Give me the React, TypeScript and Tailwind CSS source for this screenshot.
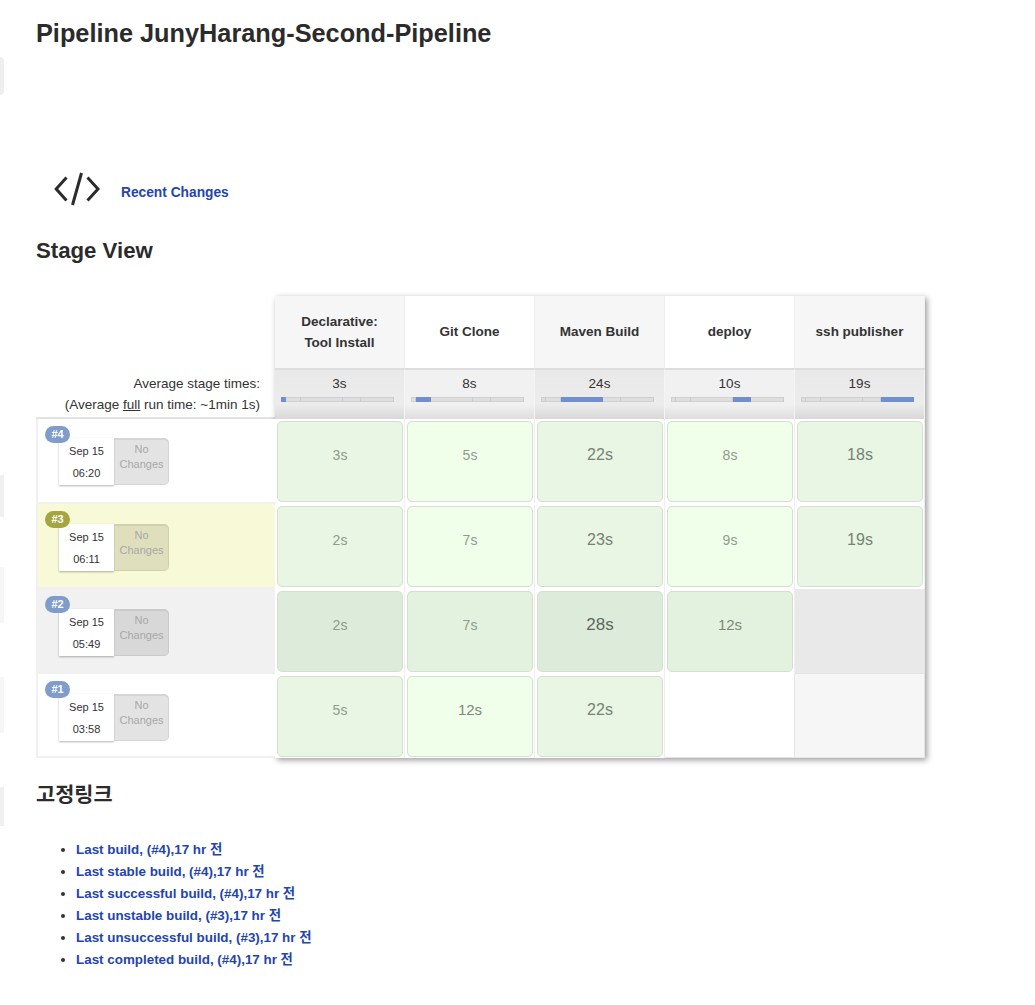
import React from 'react';

// segment widths of the mini timeline under each average time
const SEGMENTS = ['w-[5px]', 'w-[15px]', 'w-[42px]', 'w-[18px]', 'w-[33px]'];

const STAGES = [
  { name: ['Declarative:', 'Tool Install'], avg: '3s', head: 'bg-[#f6f6f6]', avgBg: 'from-[#e9e9e9] via-[#ececec] to-[#d8d8d8]' },
  { name: ['Git Clone'], avg: '8s', head: 'bg-white', avgBg: 'from-[#f1f1f1] via-[#f1f1f1] to-[#dedede]' },
  { name: ['Maven Build'], avg: '24s', head: 'bg-[#f6f6f6]', avgBg: 'from-[#e9e9e9] via-[#ececec] to-[#d8d8d8]' },
  { name: ['deploy'], avg: '10s', head: 'bg-white', avgBg: 'from-[#f1f1f1] via-[#f1f1f1] to-[#dedede]' },
  { name: ['ssh publisher'], avg: '19s', head: 'bg-[#f6f6f6]', avgBg: 'from-[#e9e9e9] via-[#ececec] to-[#d8d8d8]' },
];

const LIGHT = 'text-[14px] text-[#8f9c8c]';
const MID = 'text-[15px] text-[#7c897a]';
const DARK = 'text-[16px] text-[#768274]';
const DARKEST = 'text-[17px] text-[#5c675b]';

const BUILDS = [
  {
    id: '#4', date: 'Sep 15', time: '06:20', height: 'h-[85px]', rowBg: 'bg-white', badge: 'bg-[#7f9ccb]', change: 'bg-[#e3e3e3] border-[#d4d4d4]', top: 'pt-[19px]',
    cells: [
      { t: '3s', bg: 'bg-[#e8f6e3]', c: LIGHT },
      { t: '5s', bg: 'bg-[#efffea]', c: LIGHT },
      { t: '22s', bg: 'bg-[#e8f6e3]', c: DARK },
      { t: '8s', bg: 'bg-[#efffea]', c: LIGHT },
      { t: '18s', bg: 'bg-[#e8f6e3]', c: DARK },
    ],
  },
  {
    id: '#3', date: 'Sep 15', time: '06:11', height: 'h-[85px]', rowBg: 'bg-[#f8f9d6]', badge: 'bg-[#a5a63f]', change: 'bg-[#dfdfbd] border-[#d0d0ae]', top: 'pt-[20px]',
    cells: [
      { t: '2s', bg: 'bg-[#e8f6e3]', c: LIGHT },
      { t: '7s', bg: 'bg-[#efffea]', c: LIGHT },
      { t: '23s', bg: 'bg-[#e8f6e3]', c: DARK },
      { t: '9s', bg: 'bg-[#efffea]', c: LIGHT },
      { t: '19s', bg: 'bg-[#e8f6e3]', c: DARK },
    ],
  },
  {
    id: '#2', date: 'Sep 15', time: '05:49', height: 'h-[85px]', rowBg: 'bg-[#f1f1f1]', badge: 'bg-[#7f9ccb]', change: 'bg-[#d8d8d8] border-[#cacaca]', top: 'pt-[20px]',
    cells: [
      { t: '2s', bg: 'bg-[#dcebda]', c: LIGHT },
      { t: '7s', bg: 'bg-[#e3f1df]', c: LIGHT },
      { t: '28s', bg: 'bg-[#dcebda]', c: DARKEST },
      { t: '12s', bg: 'bg-[#e3f1df]', c: MID },
      null,
    ],
  },
  {
    id: '#1', date: 'Sep 15', time: '03:58', height: 'h-[84px]', rowBg: 'bg-white', badge: 'bg-[#7f9ccb]', change: 'bg-[#e3e3e3] border-[#d4d4d4]', top: 'pt-[20px]',
    cells: [
      { t: '5s', bg: 'bg-[#e8f6e3]', c: LIGHT },
      { t: '12s', bg: 'bg-[#efffea]', c: MID },
      { t: '22s', bg: 'bg-[#e8f6e3]', c: DARK },
      null,
      null,
    ],
  },
];

const EMPTY_CELLS: Record<string, string[]> = {
  '#2': ['', '', '', '', 'bg-[#e9e9e9]'],
  '#1': ['', '', '', 'bg-white', 'bg-[#f6f6f6]'],
};

const LINKS = [
  'Last build, (#4),17 hr 전',
  'Last stable build, (#4),17 hr 전',
  'Last successful build, (#4),17 hr 전',
  'Last unstable build, (#3),17 hr 전',
  'Last unsuccessful build, (#3),17 hr 전',
  'Last completed build, (#4),17 hr 전',
];

function CodeIcon() {
  return (
    <svg width="46" height="34" viewBox="0 0 46 34" fill="none" stroke="#2b2b2b" strokeWidth="3">
      <path d="M12.5 5.5 2.2 17l10.3 11.5" />
      <path d="M33.5 5.5 44 17 33.5 28.5" />
      <path d="M27.5 1 18.5 33" />
    </svg>
  );
}

function BuildLabel({ build }: { build: (typeof BUILDS)[number] }) {
  return (
    <div className={`${build.height} ${build.rowBg} ${build.top} relative border-2 border-t-0 border-r-0 border-[#f0f0f0] pl-[21px]`}>
      <span className={`${build.badge} absolute left-[7px] top-[7px] z-10 flex h-[17px] w-[25px] items-center justify-center rounded-full text-[11px] font-bold text-white`}>
        {build.id}
      </span>
      <div className="flex">
        <div className="flex h-[47px] w-[55px] flex-col items-center justify-between bg-white pb-[4px] pt-[5px] text-[11px] leading-[16px] text-[#333] shadow-[0_1px_2px_rgba(0,0,0,0.3)]">
          <span>{build.date}</span>
          <span>{build.time}</span>
        </div>
        <div className={`${build.change} flex h-[47px] w-[55px] flex-col items-center rounded-r-[5px] border-t-2 border-l border-r border-b pt-[2px] text-[11px] leading-[15px] text-[#a8a8a8]`}>
          <span>No</span>
          <span>Changes</span>
        </div>
      </div>
    </div>
  );
}

export default function App() {
  return (
    <div className="relative min-h-[1005px] bg-white pl-[36px] pt-[18px] font-['Liberation_Sans','Noto_Sans_CJK_KR',sans-serif] text-[#333]">
      {/* cut-off sidebar leftovers on the window edge */}
      <div className="absolute left-0 top-[57px] h-[38px] w-[4px] rounded-r-[4px] bg-[#eeeeee]" />
      <div className="absolute left-0 top-[475px] h-[42px] w-[4px] bg-[#f0f0f0]" />
      <div className="absolute left-0 top-[567px] h-[56px] w-[4px] bg-[#f6f6f6]" />
      <div className="absolute left-0 top-[677px] h-[56px] w-[4px] bg-[#f6f6f6]" />
      <div className="absolute left-0 top-[787px] h-[39px] w-[4px] bg-[#f0f0f0]" />

      <h1 className="text-[25.3px] font-bold leading-[30px] text-[#2b2b2b]">Pipeline JunyHarang-Second-Pipeline</h1>

      <div className="mt-[124px] ml-[18px] flex h-[34px] items-center gap-[21px]">
        <CodeIcon />
        <a className="pt-[9px] text-[13.75px] font-bold text-[#2345ad]">Recent Changes</a>
      </div>

      <h2 className="mt-[31px] text-[22.2px] font-bold leading-[28px] text-[#2b2b2b]">Stage View</h2>

      <div className="mt-[31px] flex items-start">
        <div className="w-[239px]">
          <div className="h-[72px]" />
          <div className="h-[51px] border-b-2 border-[#e2e2e2] pr-[15px] pt-[5px] text-right text-[13.5px] leading-[21px] text-[#333]">
            <div>Average stage times:</div>
            <div>
              (Average <u>full</u> run time: ~1min 1s)
            </div>
          </div>
          {BUILDS.map((b) => (
            <BuildLabel key={b.id} build={b} />
          ))}
        </div>

        <div className="w-[650px] shadow-[2px_2px_6px_rgba(0,0,0,0.4)]">
          <div className="grid grid-cols-[repeat(5,130px)]">
            {STAGES.map((s) => (
              <div key={s.avg} className={`${s.head} flex h-[72px] flex-col items-center justify-center border-r border-[#efefef] pb-[1px] text-[13.5px] font-bold leading-[21px] text-[#333]`}>
                {s.name.map((line) => (
                  <span key={line}>{line}</span>
                ))}
              </div>
            ))}
            {STAGES.map((s, i) => (
              <div key={s.avg} className={`bg-linear-to-b via-70% ${s.avgBg} h-[51px] border-t-2 border-r border-[#dddddd] border-r-[#f4f4f4] px-[6px] pt-[4px] text-center text-[13.5px] leading-[20px] text-[#333]`}>
                {s.avg}
                <div className="mt-[3px] flex h-[5px] w-[113px] bg-[#dedede] shadow-[inset_0_0_0_1px_#d0d0d0]">
                  {SEGMENTS.map((w, j) => (
                    <div key={j} className={`${w} ${j === i ? 'bg-[#6f8fcf]' : 'border-r border-[#cccccc]'}`} />
                  ))}
                </div>
              </div>
            ))}
            {BUILDS.map((b) =>
              b.cells.map((c, i) =>
                c ? (
                  <div key={b.id + i} className={`${b.height} border-r border-[#efefef] pl-[2px] pr-[1px] pt-[2px]`}>
                    <div className={`${c.bg} ${c.c} flex h-[81px] items-center justify-center rounded-[5px] border border-[#d4dfd0] pb-[13px]`}>{c.t}</div>
                  </div>
                ) : (
                  <div key={b.id + i} className={`${b.height} ${EMPTY_CELLS[b.id][i]} border-r border-b border-[#e4e4e4]`} />
                ),
              ),
            )}
          </div>
        </div>
      </div>

      <h2 className="mt-[22px] text-[20.8px] font-bold leading-[30px] text-[#2b2b2b]">고정링크</h2>

      <ul className="mt-[29px] list-disc pl-[40px] text-[13.4px] font-bold leading-[22px] text-[#333]">
        {LINKS.map((l) => (
          <li key={l}>
            <a className="text-[#2345ad]">{l}</a>
          </li>
        ))}
      </ul>
    </div>
  );
}
